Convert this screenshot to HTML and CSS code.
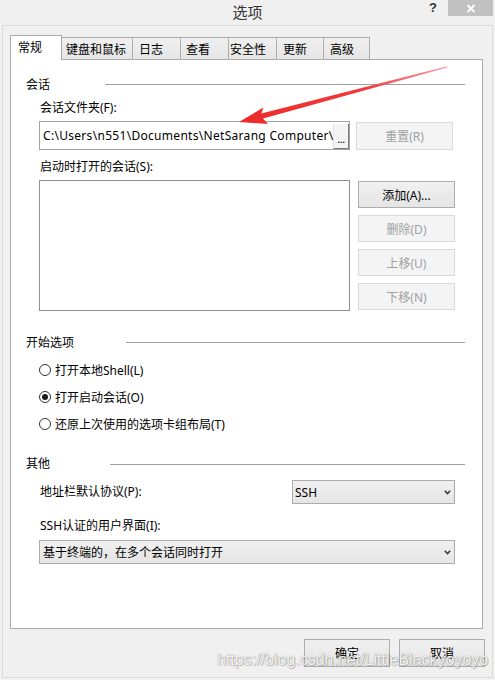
FILE: index.html
```html
<!DOCTYPE html>
<html lang="zh-CN">
<head>
<meta charset="utf-8">
<title>选项</title>
<link rel="stylesheet" href="styles.css">
</head>
<body>
<div class="window">
  <header class="titlebar">
    <div class="tb-left"></div>
    <div class="title">选项</div>
    <div class="tb-right">
      <span class="help">?</span>
      <span class="close"><svg width="10" height="9" viewBox="0 0 10 9"><path d="M1.5 1 L8.5 8 M8.5 1 L1.5 8" stroke="#fff" stroke-width="1.8" fill="none"/></svg></span>
    </div>
  </header>

  <div class="frame">
    <nav class="tabs">
      <div class="tab active t-general">常规</div>
      <div class="tab t-kb">键盘和鼠标</div>
      <div class="tab t-log">日志</div>
      <div class="tab t-view">查看</div>
      <div class="tab t-sec">安全性</div>
      <div class="tab t-upd">更新</div>
      <div class="tab t-adv">高级</div>
    </nav>

    <div class="panel">
      <section class="group g-session">
        <div class="group-head"><span class="group-title">会话</span><span class="rule"></span></div>
        <div class="group-body">
          <div class="field-label">会话文件夹(F):</div>
          <div class="row row-path">
            <div class="path-input">
              <span class="path-text">C:\Users\n551\Documents\NetSarang Computer\6\Xshell\Sessions</span>
              <span class="browse">...</span>
            </div>
            <div class="btn disabled btn-reset">重置(R)</div>
          </div>
          <div class="field-label lbl-startup">启动时打开的会话(S):</div>
          <div class="row row-list">
            <div class="listbox"></div>
            <div class="btn-col">
              <div class="btn">添加(A)...</div>
              <div class="btn disabled">删除(D)</div>
              <div class="btn disabled">上移(U)</div>
              <div class="btn disabled">下移(N)</div>
            </div>
          </div>
        </div>
      </section>

      <section class="group g-start">
        <div class="group-head"><span class="group-title">开始选项</span><span class="rule"></span></div>
        <div class="group-body radios">
          <div class="radio"><span class="dot"></span><span>打开本地Shell(L)</span></div>
          <div class="radio checked"><span class="dot"></span><span>打开启动会话(O)</span></div>
          <div class="radio"><span class="dot"></span><span>还原上次使用的选项卡组布局(T)</span></div>
        </div>
      </section>

      <section class="group g-other">
        <div class="group-head"><span class="group-title">其他</span><span class="rule"></span></div>
        <div class="group-body">
          <div class="row row-proto">
            <div class="field-label">地址栏默认协议(P):</div>
            <div class="select select-ssh"><span>SSH</span><svg class="chev" width="7" height="5" viewBox="0 0 7 5"><path d="M0.8 0.8 L3.5 3.6 L6.2 0.8" stroke="#3a3a3a" stroke-width="1.6" fill="none"/></svg></div>
          </div>
          <div class="field-label lbl-ssh">SSH认证的用户界面(I):</div>
          <div class="select select-ui"><span>基于终端的，在多个会话同时打开</span><svg class="chev" width="7" height="5" viewBox="0 0 7 5"><path d="M0.8 0.8 L3.5 3.6 L6.2 0.8" stroke="#3a3a3a" stroke-width="1.6" fill="none"/></svg></div>
        </div>
      </section>
    </div>

    <footer class="footer">
      <div class="btn btn-foot">确定</div>
      <div class="btn btn-foot">取消</div>
    </footer>
  </div>

  <svg class="arrow" width="495" height="680" viewBox="0 0 495 680">
    <defs>
      <linearGradient id="ag" x1="239" y1="122" x2="447" y2="67" gradientUnits="userSpaceOnUse">
        <stop offset="0" stop-color="#ec2a2a"/>
        <stop offset="0.6" stop-color="#f03a3a"/>
        <stop offset="1" stop-color="#f7a0a8"/>
      </linearGradient>
    </defs>
    <polygon points="239,122 263.5,107.5 261.3,113.6 447,66.3 447.3,67.6 263,118.4 268,124" fill="url(#ag)"/>
  </svg>

  <div class="watermark">https://blog.csdn.net/LittleBlackyoyoyo</div>
</div>
</body>
</html>
```

FILE: styles.css
```css
* { box-sizing: border-box; }

html, body {
  margin: 0;
  padding: 0;
}

body {
  background: #f0f0f0;
  font-family: "Noto Sans", "Noto Sans CJK SC", sans-serif;
  font-size: 12px;
  color: #000;
}

.window {
  position: relative;
  width: 495px;
  height: 680px;
  overflow: hidden;
  background: #f0f0f0;
}

/* title bar */
.titlebar {
  height: 25px;
  display: grid;
  grid-template-columns: 1fr auto 1fr;
  align-items: start;
}

.title {
  font-family: "Noto Sans CJK SC", sans-serif;
  font-size: 15px;
  line-height: 22px;
  color: #333;
  padding-top: 1px;
}

.tb-right {
  display: flex;
  justify-content: flex-end;
  align-items: flex-start;
  padding-right: 2px;
}

.help {
  font-family: "Liberation Sans", sans-serif;
  font-weight: bold;
  font-size: 13px;
  line-height: 13px;
  color: #333;
  margin-top: 1px;
  margin-right: 11px;
}

.close {
  width: 45px;
  height: 16px;
  background: #c1c1c1;
  display: flex;
  align-items: center;
  justify-content: center;
}

/* inner frame */
.frame {
  margin: 0 2px;
  height: 653px;
  border: 1px solid #dadada;
  padding: 9px 0 0 7px;
}

.tabs {
  display: flex;
  align-items: flex-end;
  height: 24px;
}

.tab {
  height: 22px;
  border: 1px solid #acacac;
  border-bottom: none;
  background: linear-gradient(#f0f0f0, #e5e5e5);
  font-family: "Noto Sans CJK SC", sans-serif;
  line-height: 16px;
  padding-top: 3px;
  margin-left: -1px;
  white-space: nowrap;
}

.tab.active {
  position: relative;
  z-index: 2;
  height: 25px;
  margin-bottom: -1px;
  margin-left: 0;
  background: #fff;
  padding-top: 3px;
}

.t-general { width: 52px; padding-left: 7px; }
.t-kb { width: 72px; padding-left: 4px; }
.t-log { width: 49px; padding-left: 6px; }
.t-view { width: 49px; padding-left: 5px; }
.t-sec { width: 49px; padding-left: 1px; }
.t-upd { width: 48px; padding-left: 6px; }
.t-adv { width: 47px; padding-left: 6px; }

/* panel */
.panel {
  position: relative;
  z-index: 1;
  width: 473px;
  height: 570px;
  border: 1px solid #acacac;
  background: #fff;
  padding: 16px 17px 0 15px;
}

.group-head {
  display: flex;
  align-items: center;
  height: 16px;
  line-height: 16px;
}

.group-title {
  font-family: "Noto Sans CJK SC", sans-serif;
}

.rule {
  flex: 1;
  height: 1px;
  background: #a0a0a0;
}

.g-session .rule { margin-left: 55px; }
.g-start .rule { margin-left: 52px; }
.g-other .rule { margin-left: 60px; margin-top: 3px; }

.g-start { margin-top: 23px; }
.g-other { margin-top: 21px; }

.group-body {
  margin: 0 10px 0 13px;
}

.field-label {
  line-height: 16px;
  padding-left: 1px;
  white-space: nowrap;
}

.g-session .group-body > .field-label:first-child { margin-top: 8px; }
.lbl-startup { margin-top: 9px; }

.row {
  display: flex;
  align-items: flex-start;
}

.row-path {
  margin-top: 5px;
  gap: 6px;
}

.path-input {
  width: 311px;
  height: 29px;
  border: 1px solid #a3a3a3;
  background: #fff;
  display: flex;
  align-items: stretch;
}

.path-text {
  flex: 1;
  overflow: hidden;
  white-space: nowrap;
  line-height: 27px;
  padding-left: 3px;
  letter-spacing: 0.3px;
}

.browse {
  width: 16px;
  margin-top: 2px;
  border-left: 1px solid #e3e3e3;
  border-right: 1px solid #7c7c7c;
  border-bottom: 1px solid #7c7c7c;
  background: #f4f4f4;
  font-size: 11px;
  line-height: 30px;
  height: 25px;
  text-align: center;
  overflow: hidden;
  letter-spacing: -0.5px;
}

.btn {
  width: 97px;
  height: 27px;
  border: 1px solid #adadad;
  background: linear-gradient(#f0f0f0, #e5e5e5);
  display: flex;
  align-items: center;
  justify-content: center;
  white-space: nowrap;
}

.btn.disabled {
  border-color: #d9d9d9;
  background: #f4f4f4;
  color: #a0a0a0;
}

.btn-reset {
  height: 28px;
  margin-top: 1px;
}

.row-list {
  margin-top: 5px;
  gap: 8px;
}

.listbox {
  width: 311px;
  height: 131px;
  border: 1px solid #8f8f8f;
  background: #fff;
}

.btn-col {
  margin-top: 1px;
  display: flex;
  flex-direction: column;
  gap: 7px;
}

/* radios */
.radios {
  margin-top: 10px;
  display: flex;
  flex-direction: column;
  gap: 7px;
}

.radio {
  display: flex;
  align-items: center;
  height: 20px;
  gap: 4px;
  white-space: nowrap;
}

.dot {
  width: 12px;
  height: 12px;
  border: 1px solid #333;
  border-radius: 50%;
  background: #fff;
  display: flex;
  align-items: center;
  justify-content: center;
}

.radio.checked .dot::after {
  content: "";
  width: 6px;
  height: 6px;
  border-radius: 50%;
  background: #1a1a1a;
}

/* selects */
.row-proto {
  margin-top: 9px;
  align-items: center;
}

.select {
  height: 24px;
  border: 1px solid #acacac;
  background: linear-gradient(#f0f0f0, #e5e5e5);
  display: flex;
  align-items: center;
  justify-content: space-between;
  padding: 0 3px 0 3px;
  white-space: nowrap;
}

.select-ssh {
  margin-left: auto;
  width: 163px;
  padding-left: 2px;
}

.lbl-ssh { margin-top: 14px; }

.select-ui {
  margin-top: 6px;
  width: 416px;
}

/* footer */
.footer {
  margin-top: 10px;
  display: flex;
  justify-content: flex-end;
  gap: 9px;
  padding-right: 7px;
}

.btn-foot {
  width: 86px;
  height: 28px;
}

/* overlays */
.arrow {
  position: absolute;
  z-index: 10;
  left: 0;
  top: 0;
  pointer-events: none;
}

.watermark {
  position: absolute;
  z-index: 11;
  left: 217px;
  top: 651px;
  font-family: "Liberation Sans", Arial, sans-serif;
  font-size: 16px;
  line-height: 18px;
  color: rgba(255, 255, 255, 0.92);
  text-shadow: 0 0 1px rgba(0, 0, 0, 0.45), 1px 1px 1px rgba(0, 0, 0, 0.2);
  white-space: nowrap;
  pointer-events: none;
}
```
